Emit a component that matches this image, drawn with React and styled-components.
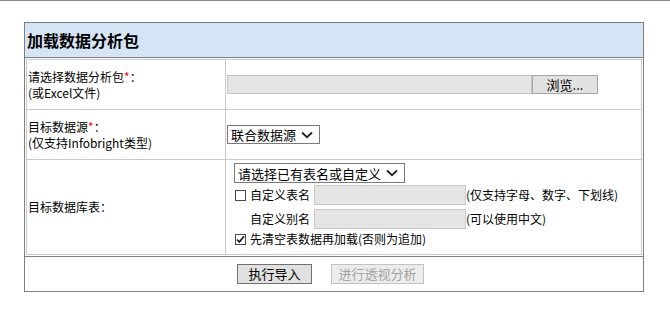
import React from 'react';
import styled, { createGlobalStyle } from 'styled-components';

const GlobalStyle = createGlobalStyle`
    html, body {
        margin: 0;
        padding: 0;
        background: #fff;
    }
    body {
        font-family: "Noto Sans CJK SC", "Microsoft YaHei", "Liberation Sans", sans-serif;
        font-size: 12px;
        color: #000;
    }
`;

const Page = styled.div`
    border-top: 1px solid #8a8a8a;
    padding: 21px 0 18px 24px;
`;

const Panel = styled.div`
    width: 620px;
    box-sizing: border-box;
    border: 1px solid #7f7f7f;
`;

const Header = styled.div`
    height: 34px;
    display: flex;
    align-items: center;
    padding-left: 2px;
    background: #d6e5f5;
    border-bottom: 1px solid #7f7f7f;

    h2 {
        margin: 0;
        font-size: 16px;
        font-weight: bold;
        line-height: 20px;
    }
`;

const FormTable = styled.div`
    margin: 1px;
    border: 1px solid #cacaca;
`;

const Row = styled.div`
    display: grid;
    grid-template-columns: 199px 1fr;
    height: ${({ height }) => height}px;
    & + & {
        border-top: 1px solid #cacaca;
    }
`;

const LabelCell = styled.div`
    display: flex;
    flex-direction: column;
    justify-content: center;
    padding-left: 1px;
    border-right: 1px solid #cacaca;
    line-height: 16px;
`;

const Required = styled.span`
    color: #f00;
`;

const ValueCell = styled.div`
    display: flex;
    flex-direction: column;
    justify-content: ${({ top }) => (top ? 'flex-start' : 'center')};
    align-items: flex-start;
    padding: ${({ top }) => (top ? '3px 0 0 8px' : '0 0 0 1px')};
`;

const FilePicker = styled.div`
    display: flex;
    height: 19px;
`;

const FileField = styled.div`
    width: 305px;
    box-sizing: border-box;
    background: #e5e5e5;
    border: 1px solid #c4c4c4;
`;

const BrowseButton = styled.div`
    width: 66px;
    box-sizing: border-box;
    display: flex;
    align-items: center;
    justify-content: center;
    background: #e1e1e1;
    border: 1px solid #a5a5a5;
    font-size: 13px;
    line-height: 17px;
`;

const SelectBox = styled.div`
    width: ${({ width }) => width}px;
    height: ${({ height }) => height || 19}px;
    box-sizing: border-box;
    display: flex;
    align-items: center;
    justify-content: space-between;
    padding: 0 6px 0 3px;
    border: 1px solid #7a7a7a;
    background: #fff;
    font-size: 13px;
    line-height: 17px;
`;

const Line = styled.div`
    display: flex;
    align-items: center;
    height: ${({ height }) => height || 22}px;
    margin-top: ${({ gap }) => gap || 0}px;
    line-height: 16px;
    white-space: nowrap;
`;

const LabelSlot = styled.div`
    width: ${({ wide }) => (wide ? 'auto' : '80px')};
    flex-shrink: 0;
    display: flex;
    align-items: center;
    padding-left: ${({ indent }) => (indent ? 16 : 1)}px;
    box-sizing: border-box;
`;

const Box = styled.span`
    width: 11px;
    height: 11px;
    box-sizing: border-box;
    border: 1px solid #4a4a4a;
    background: #fff;
    margin-right: 4px;
    display: inline-flex;
    align-items: center;
    justify-content: center;
    flex-shrink: 0;
`;

const TextField = styled.div`
    width: 152px;
    height: 20px;
    box-sizing: border-box;
    background: #e5e5e5;
    border: 1px solid #c8c8c8;
`;

const Footer = styled.div`
    height: 34px;
    border-top: 1px solid #7f7f7f;
    display: flex;
    align-items: center;
    justify-content: center;
    gap: 19px;
    padding-right: 7px;
`;

const Button = styled.div`
    width: ${({ width }) => width}px;
    height: 20px;
    box-sizing: border-box;
    display: flex;
    align-items: center;
    justify-content: center;
    font-size: 13px;
    line-height: 18px;
    color: ${({ disabled }) => (disabled ? '#a2a2a2' : '#000')};
    background: ${({ disabled }) => (disabled ? '#ececec' : '#e1e1e1')};
    border: 1px solid ${({ disabled }) => (disabled ? '#c2c2c2' : '#707070')};
`;

const Chevron = () => (
    <svg width="12" height="8" viewBox="0 0 12 8">
        <path d="M1 1.5 L6 6.2 L11 1.5" fill="none" stroke="#222" strokeWidth="1.8" />
    </svg>
);

const Check = () => (
    <svg width="9" height="9" viewBox="0 0 9 9">
        <path d="M1 4.5 L3.4 7 L8 1.3" fill="none" stroke="#111" strokeWidth="1.6" />
    </svg>
);

const Checkbox = ({ checked }) => <Box>{checked && <Check />}</Box>;

const App = () => (
    <>
        <GlobalStyle />
        <Page>
            <Panel>
                <Header>
                    <h2>加载数据分析包</h2>
                </Header>
                <FormTable>
                    <Row height={49}>
                        <LabelCell>
                            <span>
                                请选择数据分析包<Required>*</Required>：
                            </span>
                            <span>(或Excel文件)</span>
                        </LabelCell>
                        <ValueCell>
                            <FilePicker>
                                <FileField />
                                <BrowseButton>浏览...</BrowseButton>
                            </FilePicker>
                        </ValueCell>
                    </Row>
                    <Row height={49}>
                        <LabelCell>
                            <span>
                                目标数据源<Required>*</Required>：
                            </span>
                            <span>(仅支持Infobright类型)</span>
                        </LabelCell>
                        <ValueCell>
                            <SelectBox width={93}>
                                <span>联合数据源</span>
                                <Chevron />
                            </SelectBox>
                        </ValueCell>
                    </Row>
                    <Row height={94}>
                        <LabelCell>
                            <span>目标数据库表：</span>
                        </LabelCell>
                        <ValueCell top>
                            <SelectBox width={171} height={20}>
                                <span>请选择已有表名或自定义</span>
                                <Chevron />
                            </SelectBox>
                            <Line gap={1}>
                                <LabelSlot>
                                    <Checkbox />
                                    <span>自定义表名</span>
                                </LabelSlot>
                                <TextField />
                                <span>(仅支持字母、数字、下划线)</span>
                            </Line>
                            <Line gap={2}>
                                <LabelSlot indent>
                                    <span>自定义别名</span>
                                </LabelSlot>
                                <TextField />
                                <span>(可以使用中文)</span>
                            </Line>
                            <Line height={18}>
                                <LabelSlot wide>
                                    <Checkbox checked />
                                    <span>先清空表数据再加载(否则为追加)</span>
                                </LabelSlot>
                            </Line>
                        </ValueCell>
                    </Row>
                </FormTable>
                <Footer>
                    <Button width={75}>执行导入</Button>
                    <Button width={93} disabled>
                        进行透视分析
                    </Button>
                </Footer>
            </Panel>
        </Page>
    </>
);

export default App;
